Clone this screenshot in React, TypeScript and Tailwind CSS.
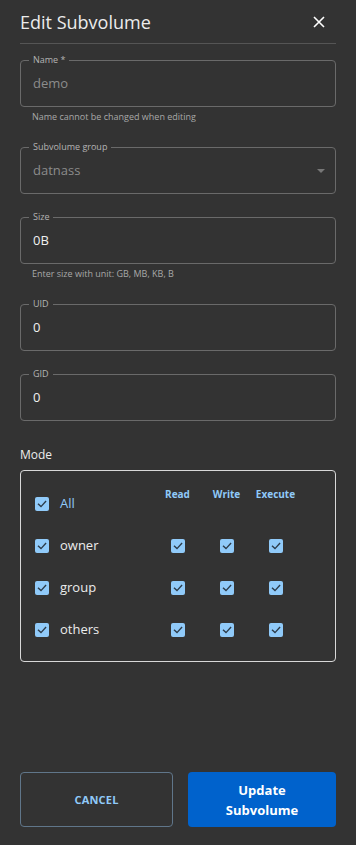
import React from "react";

const font = { fontFamily: '"Open Sans", "Noto Sans", sans-serif' };

function Check() {
  return (
    <span className="flex h-[14px] w-[14px] items-center justify-center rounded-[2px] bg-[#90caf9]">
      <svg width="12" height="12" viewBox="0 0 12 12" fill="none">
        <path d="M2.5 6.2 L5 8.6 L9.6 3.6" stroke="#2b3a48" strokeWidth="1.4" strokeLinecap="square" />
      </svg>
    </span>
  );
}

function Field({ label, value, muted, select }: { label: string; value: string; muted?: boolean; select?: boolean }) {
  return (
    <div className="relative flex h-[47px] items-center rounded-[4px] border border-[#6a6a6a] px-[12px]">
      <span className="absolute -top-[8px] left-[8px] bg-[#333333] px-[4px] text-[9px] leading-[14px] text-[#b4b4b4]">
        {label}
      </span>
      <span className={"text-[13px] " + (muted ? "text-[#8c8c8c]" : "text-[#f0f0f0]")}>{value}</span>
      {select && (
        <svg className="ml-auto mr-[-3px]" width="10" height="6" viewBox="0 0 10 6">
          <path d="M1 1 L9 1 L5 5 Z" fill="#777777" />
        </svg>
      )}
    </div>
  );
}

function Helper({ text }: { text: string }) {
  return <div className="mt-[3px] pl-[12px] text-[9px] leading-[14px] text-[#a8a8a8]">{text}</div>;
}

export default function App() {
  const rows = ["owner", "group", "others"];
  return (
    <div style={font} className="flex h-[845px] w-[356px] flex-col bg-[#333333] px-[20px]">
      <div className="flex h-[44px] items-center justify-between border-b border-[#555555] pt-[1px]">
        <span className="text-[18px] text-[#ececec]">Edit Subvolume</span>
        <svg className="mr-[11px]" width="12" height="12" viewBox="0 0 12 12">
          <path d="M1 1 L11 11 M11 1 L1 11" stroke="#ffffff" strokeWidth="1.6" />
        </svg>
      </div>

      <div className="mt-[16px]">
        <Field label="Name *" value="demo" muted />
        <Helper text="Name cannot be changed when editing" />
      </div>
      <div className="mt-[23px]">
        <Field label="Subvolume group" value="datnass" muted select />
      </div>
      <div className="mt-[23px]">
        <Field label="Size" value="0B" />
        <Helper text="Enter size with unit: GB, MB, KB, B" />
      </div>
      <div className="mt-[23px]">
        <Field label="UID" value="0" />
      </div>
      <div className="mt-[23px]">
        <Field label="GID" value="0" />
      </div>

      <div className="mt-[25px] text-[12px] leading-[18px] text-[#ececec]">Mode</div>
      <div className="mt-[6px] rounded-[4px] border border-[#d8d8d8] pb-[10px] pl-[14px] pr-[35px] pt-[12px]">
        <div className="grid grid-cols-[1fr_49px_49px_49px]">
          <div className="flex h-[42px] items-center gap-[11px]">
            <Check />
            <span className="text-[13px] text-[#90caf9]">All</span>
          </div>
          {["Read", "Write", "Execute"].map((h) => (
            <div key={h} className="self-start pt-[4px] text-center text-[10px] font-bold leading-[14px] text-[#90caf9]">
              {h}
            </div>
          ))}
          {rows.map((r) => (
            <React.Fragment key={r}>
              <div className="flex h-[42px] items-center gap-[11px]">
                <Check />
                <span className="text-[13px] text-[#ececec]">{r}</span>
              </div>
              <div className="flex items-center justify-center"><Check /></div>
              <div className="flex items-center justify-center"><Check /></div>
              <div className="flex items-center justify-center"><Check /></div>
            </React.Fragment>
          ))}
        </div>
      </div>

      <div className="mb-[18px] mt-auto flex gap-[15px]">
        <button className="flex h-[55px] w-[153px] items-center justify-center rounded-[4px] border border-[#60768a] pt-[2px] text-[11px] font-bold tracking-[0.2px] text-[#90caf9]">
          CANCEL
        </button>
        <button className="flex h-[55px] flex-1 items-center justify-center rounded-[4px] bg-[#0062cc] px-[10px] text-center text-[13px] font-bold leading-[20px] text-white">
          Update
          <br />
          Subvolume
        </button>
      </div>
    </div>
  );
}
